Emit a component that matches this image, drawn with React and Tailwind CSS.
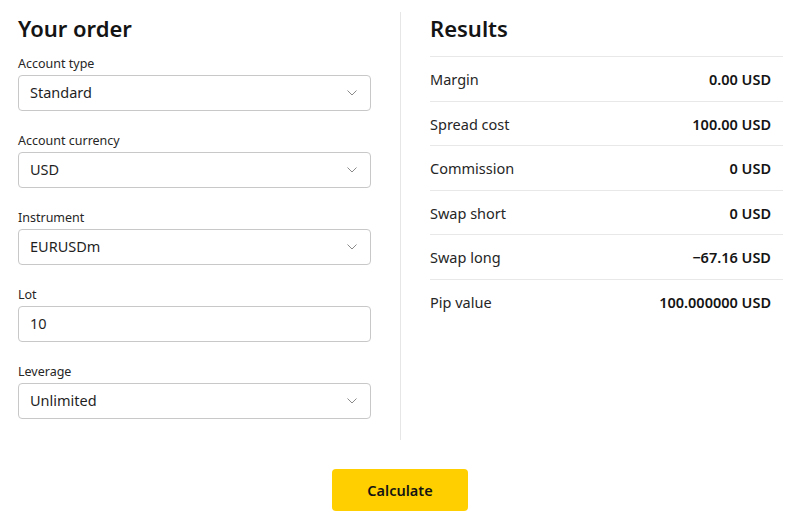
import React, {useState} from "react";

function Chevron() {
    return (
        <svg width="10" height="6" viewBox="0 0 10 6" fill="none" className="text-[#8a8a8a]">
            <path d="M0.5 0.5L5 5L9.5 0.5" stroke="currentColor" strokeWidth="1" />
        </svg>
    );
}

function Field({label, value, select = true}) {
    return (
        <div>
            <div className="text-[12.5px] leading-[18px] text-[#262626] mb-[2px] pt-[1px]">{label}</div>
            <div className="h-[36px] border border-[#c8c8c8] rounded-[4px] flex items-center justify-between pl-[11px] pr-[13px]">
                <span className="text-[14.5px] text-[#1f1f1f]">{value}</span>
                {select && <Chevron />}
            </div>
        </div>
    );
}

const results = [
    ['Margin', '0.00 USD'],
    ['Spread cost', '100.00 USD'],
    ['Commission', '0 USD'],
    ['Swap short', '0 USD'],
    ['Swap long', '−67.16 USD'],
    ['Pip value', '100.000000 USD'],
];

export default function App() {
    const [fields] = useState([
        {label: 'Account type', value: 'Standard'},
        {label: 'Account currency', value: 'USD'},
        {label: 'Instrument', value: 'EURUSDm'},
        {label: 'Lot', value: '10', select: false},
        {label: 'Leverage', value: 'Unlimited'},
    ]);

    return (
        <div className="w-[800px] h-[525px] bg-white text-[#141414] font-['Noto_Sans',sans-serif]">
            <div className="flex pt-[12px]">
                <div className="w-[401px] h-[428px] border-r border-[#e6e6e6] pl-[18px] pr-[29px]">
                    <h2 className="text-[22px] leading-[32px] font-semibold mb-[10px]">Your order</h2>
                    <div className="flex flex-col gap-[20px]">
                        {fields.map(f => (
                            <Field key={f.label} label={f.label} value={f.value} select={f.select !== false} />
                        ))}
                    </div>
                </div>
                <div className="flex-1 pl-[29px] pr-[17px]">
                    <h2 className="text-[22px] leading-[32px] font-semibold mb-[12px]">Results</h2>
                    <div>
                        {results.map(([name, val]) => (
                            <div
                                key={name}
                                className="h-[44.6px] border-t border-[#e8e8e8] flex items-center justify-between pr-[12px] pt-[2px]"
                            >
                                <span className="text-[14.5px] text-[#262626]">{name}</span>
                                <span className="text-[14.5px] font-semibold text-[#141414]">{val}</span>
                            </div>
                        ))}
                    </div>
                </div>
            </div>
            <div className="flex justify-center mt-[29px]">
                <button className="w-[136px] h-[42px] rounded-[4px] bg-[#ffcf00] text-[14.5px] font-semibold text-[#141414] pt-[2px]">
                    Calculate
                </button>
            </div>
        </div>
    );
}
